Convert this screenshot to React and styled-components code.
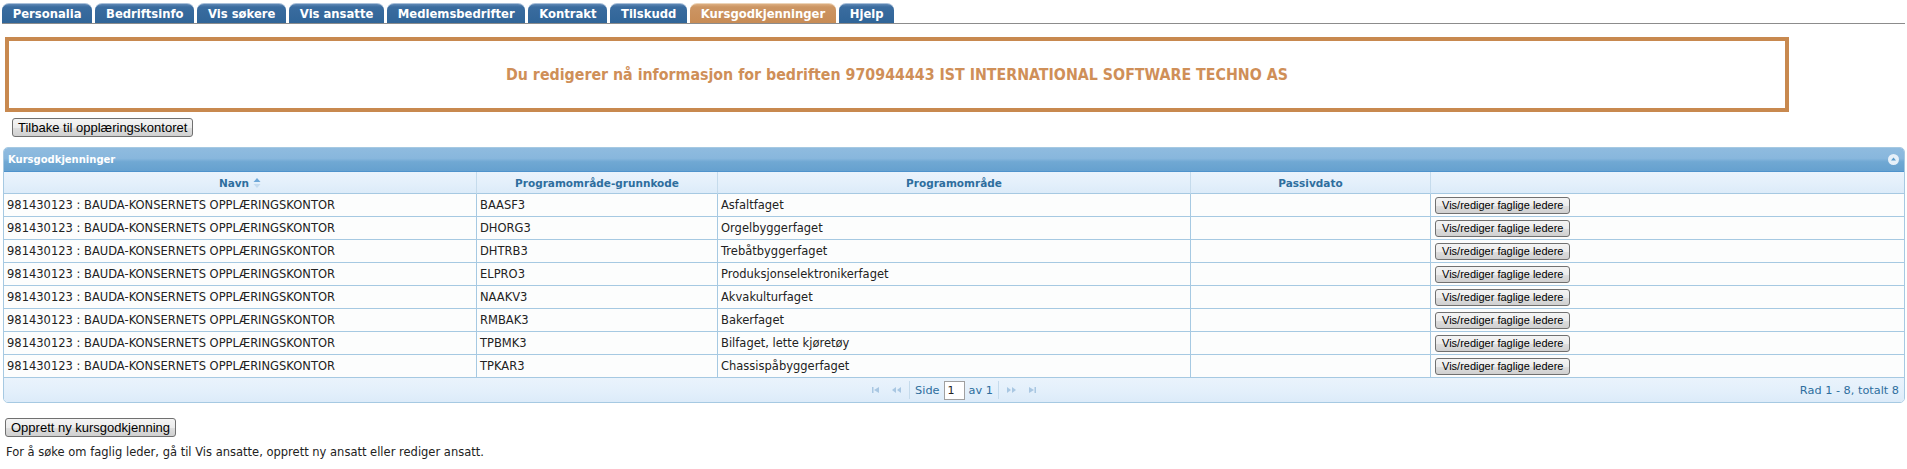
import React from "react";
import styled, { createGlobalStyle } from "styled-components";

const GlobalStyle = createGlobalStyle`
  html, body { margin: 0; padding: 0; background: #ffffff; }
  body { font-family: "DejaVu Sans", Verdana, sans-serif; font-size: 11px; color: #222222; }
`;

const Page = styled.div`
  padding: 3px 2px 0 2px;
  width: 1903px;
`;

const TabBar = styled.div`
  display: flex;
  gap: 3px;
  border-bottom: 1px solid #8c8c8c;
  height: 20px;
`;

const Tab = styled.div`
  height: 20px;
  box-sizing: border-box;
  padding: 0 10.75px;
  display: flex;
  align-items: center;
  justify-content: center;
  font-family: "DejaVu Sans", Verdana, sans-serif;
  font-weight: bold;
  font-size: 11.6px;
  color: #ffffff;
  border-radius: 7px 7px 0 0;
  border-top: 1px solid ${(p) => (p.$active ? "#ecd4b8" : "#a9c0da")};
  background: ${(p) =>
    p.$active
      ? "linear-gradient(#dcae80 0, #cc9563 3px, #c88c56 100%)"
      : "linear-gradient(#5f88b5 0, #3a6c9f 3px, #306598 100%)"};
`;

const Banner = styled.div`
  margin: 13px 0 0 3px;
  width: 1784px;
  height: 75px;
  box-sizing: border-box;
  border: 4px solid #c8894f;
  display: flex;
  align-items: center;
  justify-content: center;
  font-family: "DejaVu Sans Condensed", "DejaVu Sans", Tahoma, sans-serif;
  font-weight: bold;
  font-size: 15.8px;
  color: #cf8f58;
`;

const Button = styled.button`
  box-sizing: border-box;
  height: ${(p) => (p.$small ? "17px" : "19px")};
  padding: 0 ${(p) => (p.$small ? "6px" : "5px")};
  border: 1px solid #707070;
  border-radius: 3px;
  background: linear-gradient(#f4f4f4 0%, #ececec 50%, #dedede 51%, #d0d0d0 100%);
  font-family: "Liberation Sans", Arial, sans-serif;
  font-size: ${(p) => (p.$small ? "11px" : "13px")};
  color: #000000;
  line-height: 1;
  white-space: nowrap;
  cursor: pointer;
`;

const ButtonRow = styled.div`
  margin: ${(p) => p.$margin};
  display: flex;
`;

const Grid = styled.div`
  margin: 10px 0 0 1px;
  width: 1902px;
  box-sizing: border-box;
  border: 1px solid #a6c9e2;
  border-radius: 5px;
  overflow: hidden;
  background: #fcfdfd;
`;

const Caption = styled.div`
  height: 24px;
  box-sizing: border-box;
  display: flex;
  align-items: center;
  justify-content: space-between;
  padding: 0 5px 0 4px;
  background: linear-gradient(#8fbbdf 0%, #88b7dd 45%, #70a8d3 60%, #66a1cf 100%);
  border-bottom: 1px solid #4f93cc;
  color: #ffffff;
  font-weight: bold;
  font-size: 10px;
`;

const CollapseIcon = styled.span`
  width: 11px;
  height: 11px;
  display: flex;
  align-items: center;
  justify-content: center;
`;

const Table = styled.table`
  width: 1900px;
  border-collapse: separate;
  border-spacing: 0;
  table-layout: fixed;
`;

const HeadCell = styled.th`
  height: 21px;
  padding: 0 4px;
  border-right: 1px solid #c5dbec;
  border-bottom: 1px solid #a6c9e2;
  background: linear-gradient(#eaf3fc 0%, #e4f0fb 50%, #dcebf9 100%);
  color: #2e6e9e;
  font-weight: bold;
  font-size: 10.5px;
  text-align: center;
  &:last-child { border-right: none; }
`;

const HeadInner = styled.span`
  display: inline-flex;
  align-items: center;
  gap: 4px;
`;

const Cell = styled.td`
  height: 22px;
  padding: 0 ${(p) => (p.$button ? "4px" : "3px")};
  border-right: 1px solid #a6c9e2;
  border-bottom: 1px solid #a6c9e2;
  font-size: 11.5px;
  color: #222222;
  white-space: nowrap;
  overflow: hidden;
  vertical-align: middle;
  &:last-child { border-right: none; }
`;

const Pager = styled.div`
  height: 24px;
  display: grid;
  grid-template-columns: 1fr auto 1fr;
  align-items: center;
  background: linear-gradient(#eaf3fc 0%, #e4f0fb 50%, #dcebf9 100%);
  color: #2e6e9e;
  font-size: 11.3px;
`;

const PagerCenter = styled.div`
  grid-column: 2;
  display: flex;
  align-items: center;
  gap: 4px;
`;

const PagerIcon = styled.span`
  width: 16px;
  height: 16px;
  display: flex;
  align-items: center;
  justify-content: center;
`;

const Sep = styled.span`
  width: 1px;
  height: 18px;
  background: #c5dbec;
  margin: 0 1px;
`;

const PageInput = styled.div`
  width: 21px;
  height: 19px;
  box-sizing: border-box;
  border: 1px solid #a0a0a0;
  background: #ffffff;
  color: #222222;
  padding: 2px 0 0 3px;
  font-size: 11px;
`;

const PagerRight = styled.div`
  grid-column: 3;
  text-align: right;
  padding-right: 5px;
`;

const Note = styled.div`
  margin: 8px 0 0 4px;
  font-size: 11.5px;
  color: #222222;
`;

const tabs = [
  "Personalia",
  "Bedriftsinfo",
  "Vis søkere",
  "Vis ansatte",
  "Medlemsbedrifter",
  "Kontrakt",
  "Tilskudd",
  "Kursgodkjenninger",
  "Hjelp",
];

const rows = [
  ["BAASF3", "Asfaltfaget"],
  ["DHORG3", "Orgelbyggerfaget"],
  ["DHTRB3", "Trebåtbyggerfaget"],
  ["ELPRO3", "Produksjonselektronikerfaget"],
  ["NAAKV3", "Akvakulturfaget"],
  ["RMBAK3", "Bakerfaget"],
  ["TPBMK3", "Bilfaget, lette kjøretøy"],
  ["TPKAR3", "Chassispåbyggerfaget"],
];

const SortIcon = () => (
  <svg width="8" height="12" viewBox="0 0 8 12">
    <path d="M4 1 L7.5 5 L0.5 5 Z" fill="#6fa8d8" />
    <path d="M4 11 L7.5 7 L0.5 7 Z" fill="#c4dbef" />
  </svg>
);

const Collapse = () => (
  <svg width="11" height="11" viewBox="0 0 11 11">
    <circle cx="5.5" cy="5.5" r="5.5" fill="#e6f0f9" />
    <path d="M5.5 3.5 L8 6.5 L3 6.5 Z" fill="#5c9ccc" />
  </svg>
);

const PagerGlyph = ({ kind }) => {
  const c = "#a9c7e2";
  if (kind === "first")
    return (
      <svg width="10" height="8" viewBox="0 0 10 8">
        <rect x="1" y="1" width="1.5" height="6" fill={c} />
        <path d="M3 4 L8 1 L8 7 Z" fill={c} />
      </svg>
    );
  if (kind === "prev")
    return (
      <svg width="11" height="8" viewBox="0 0 11 8">
        <path d="M1 4 L5 1 L5 7 Z" fill={c} />
        <path d="M6 4 L10 1 L10 7 Z" fill={c} />
      </svg>
    );
  if (kind === "next")
    return (
      <svg width="11" height="8" viewBox="0 0 11 8">
        <path d="M5 4 L1 1 L1 7 Z" fill={c} />
        <path d="M10 4 L6 1 L6 7 Z" fill={c} />
      </svg>
    );
  return (
    <svg width="10" height="8" viewBox="0 0 10 8">
      <path d="M7 4 L2 1 L2 7 Z" fill={c} />
      <rect x="7.5" y="1" width="1.5" height="6" fill={c} />
    </svg>
  );
};

export default function App() {
  return (
    <Page>
      <GlobalStyle />
      <TabBar>
        {tabs.map((t) => (
          <Tab key={t} $active={t === "Kursgodkjenninger"}>
            {t}
          </Tab>
        ))}
      </TabBar>

      <Banner>
        Du redigerer nå informasjon for bedriften 970944443 IST INTERNATIONAL SOFTWARE TECHNO AS
      </Banner>

      <ButtonRow $margin="6px 0 0 10px">
        <Button>Tilbake til opplæringskontoret</Button>
      </ButtonRow>

      <Grid>
        <Caption>
          <span>Kursgodkjenninger</span>
          <CollapseIcon>
            <Collapse />
          </CollapseIcon>
        </Caption>
        <Table>
          <colgroup>
            <col style={{ width: 473 }} />
            <col style={{ width: 241 }} />
            <col style={{ width: 473 }} />
            <col style={{ width: 240 }} />
            <col style={{ width: 473 }} />
          </colgroup>
          <thead>
            <tr>
              <HeadCell>
                <HeadInner>
                  Navn <SortIcon />
                </HeadInner>
              </HeadCell>
              <HeadCell>Programområde-grunnkode</HeadCell>
              <HeadCell>Programområde</HeadCell>
              <HeadCell>Passivdato</HeadCell>
              <HeadCell></HeadCell>
            </tr>
          </thead>
          <tbody>
            {rows.map(([code, name]) => (
              <tr key={code}>
                <Cell>981430123 : BAUDA-KONSERNETS OPPLÆRINGSKONTOR</Cell>
                <Cell>{code}</Cell>
                <Cell>{name}</Cell>
                <Cell></Cell>
                <Cell $button>
                  <Button $small>Vis/rediger faglige ledere</Button>
                </Cell>
              </tr>
            ))}
          </tbody>
        </Table>
        <Pager>
          <PagerCenter>
            <PagerIcon>
              <PagerGlyph kind="first" />
            </PagerIcon>
            <PagerIcon>
              <PagerGlyph kind="prev" />
            </PagerIcon>
            <Sep />
            <span>Side</span>
            <PageInput>1</PageInput>
            <span>av 1</span>
            <Sep />
            <PagerIcon>
              <PagerGlyph kind="next" />
            </PagerIcon>
            <PagerIcon>
              <PagerGlyph kind="last" />
            </PagerIcon>
          </PagerCenter>
          <PagerRight>Rad 1 - 8, totalt 8</PagerRight>
        </Pager>
      </Grid>

      <ButtonRow $margin="15px 0 0 3px">
        <Button>Opprett ny kursgodkjenning</Button>
      </ButtonRow>

      <Note>For å søke om faglig leder, gå til Vis ansatte, opprett ny ansatt eller rediger ansatt.</Note>
    </Page>
  );
}
